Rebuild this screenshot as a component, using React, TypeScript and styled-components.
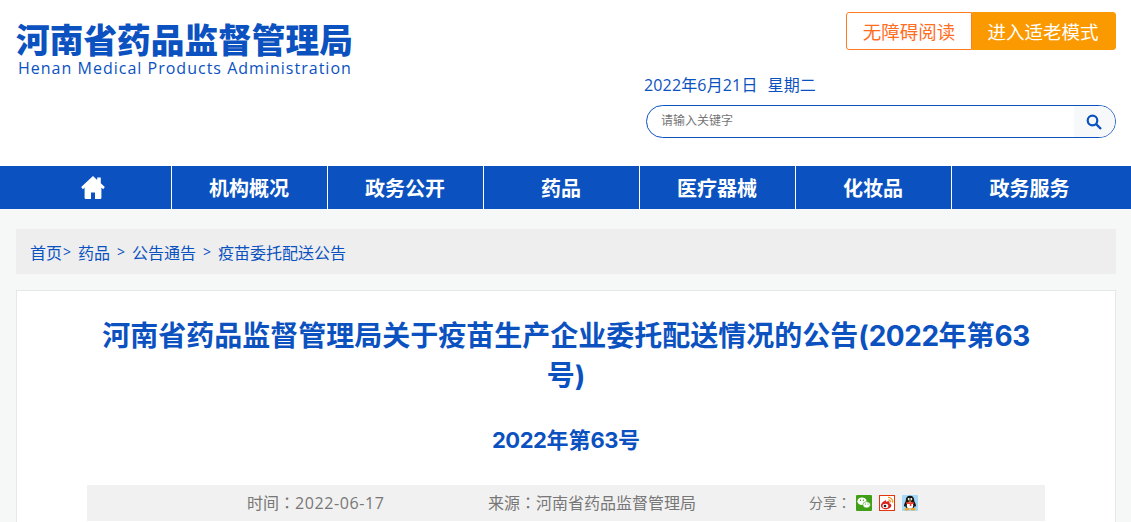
import React from 'react';
import styled, { createGlobalStyle } from 'styled-components';

const blue = '#0b52c0';

const GlobalStyle = createGlobalStyle`
  html, body {
    margin: 0;
    padding: 0;
    height: 522px;
    overflow: hidden;
    background: #f6f8f8;
    font-family: "Open Sans", "Noto Sans CJK SC", sans-serif;
  }
`;

const Header = styled.header`
  height: 166px;
  background: #fff;
  display: flex;
  justify-content: space-between;
  padding: 0 15px 0 16px;
  box-sizing: border-box;
`;

const Logo = styled.div`
  padding-top: 18px;
  color: ${blue};
`;

const LogoTitle = styled.div`
  font-family: "Noto Sans CJK SC", sans-serif;
  font-size: 33.7px;
  font-weight: 900;
  line-height: 42px;
  white-space: nowrap;
`;

const LogoSub = styled.div`
  font-family: "Open Sans", sans-serif;
  font-size: 16px;
  line-height: 17px;
  letter-spacing: 1.01px;
  margin-left: 2px;
  white-space: nowrap;
`;

const Tools = styled.div`
  width: 470px;
  display: flex;
  flex-direction: column;
`;

const ModeButtons = styled.div`
  display: flex;
  justify-content: flex-end;
  margin-top: 12px;
`;

const ModeButton = styled.div<{ $filled?: boolean }>`
  height: 38px;
  box-sizing: border-box;
  width: ${(p) => (p.$filled ? '144px' : '126px')};
  padding-right: ${(p) => (p.$filled ? '2px' : '0')};
  display: flex;
  align-items: center;
  justify-content: center;
  font-family: "Noto Sans CJK SC", sans-serif;
  font-size: 18.5px;
  color: ${(p) => (p.$filled ? '#fff' : '#ff6e1f')};
  background: ${(p) => (p.$filled ? '#fb9900' : '#fff')};
  border: 1px solid ${(p) => (p.$filled ? '#fb9900' : '#ff7d20')};
  border-radius: ${(p) => (p.$filled ? '0 3px 3px 0' : '3px 0 0 3px')};
`;

const DateLine = styled.div`
  display: flex;
  gap: 10px;
  margin-top: 24px;
  margin-left: -2px;
  font-size: 16px;
  line-height: 22px;
  letter-spacing: 0.15px;
  color: ${blue};
`;

const SearchBox = styled.div`
  display: flex;
  align-items: center;
  height: 33px;
  margin-top: 9px;
  box-sizing: border-box;
  border: 1px solid ${blue};
  border-radius: 17px;
  overflow: hidden;
  background: #fff;
`;

const SearchHint = styled.div`
  flex: 1;
  padding: 0 0 4px 14px;
  font-family: "Noto Sans CJK SC", sans-serif;
  font-size: 12px;
  color: #757575;
`;

const SearchButton = styled.div`
  width: 41px;
  height: 100%;
  padding-right: 2px;
  box-sizing: border-box;
  display: flex;
  align-items: center;
  justify-content: center;
  background: #f7f8f9;
`;

const Nav = styled.nav`
  height: 43px;
  background: ${blue};
  display: flex;
  padding-left: 16px;
`;

const NavItem = styled.div<{ $last?: boolean }>`
  width: 156px;
  box-sizing: border-box;
  padding-right: 1px;
  display: flex;
  align-items: center;
  justify-content: center;
  color: #fff;
  font-family: "Noto Sans CJK SC", sans-serif;
  font-size: 20px;
  font-weight: 700;
  border-right: ${(p) => (p.$last ? 'none' : '1px solid #fff')};
`;

const Main = styled.main`
  padding: 20px 15px 0 16px;
`;

const Breadcrumb = styled.div`
  height: 45px;
  background: #eee;
  display: flex;
  align-items: center;
  padding-left: 14px;
  font-family: "Noto Sans CJK SC", sans-serif;
  font-size: 16px;
  color: ${blue};
  white-space: pre;
`;

const Sep = styled.span<{ $tight?: boolean }>`
  font-family: "Open Sans", sans-serif;
  font-size: 14px;
  margin: ${(p) => (p.$tight ? '0 7px 0 1px' : '0 7px')};
`;

const Article = styled.article`
  margin-top: 16px;
  background: #fff;
  border: 1px solid #e6e8e8;
  border-bottom: none;
  height: 232px;
  padding: 0 70px;
  box-sizing: border-box;
`;

const Title = styled.h1`
  margin: 25px 0 0;
  color: ${blue};
  font-family: "Inter", "Noto Sans CJK SC", sans-serif;
  font-size: 28px;
  font-weight: 700;
  line-height: 40px;
  text-align: center;
`;

const SubTitle = styled.h2`
  margin: 29px 0 0;
  color: ${blue};
  font-family: "Inter", "Noto Sans CJK SC", sans-serif;
  font-size: 22px;
  font-weight: 700;
  line-height: 30px;
  text-align: center;
`;

const Digits = styled.span`
  letter-spacing: -0.5px;
`;

const Meta = styled.div`
  margin-top: 30px;
  height: 36px;
  background: #f1f1f1;
  display: flex;
  align-items: center;
  color: #777;
  font-size: 16px;
  white-space: nowrap;
`;

const MetaTime = styled.span`
  margin: 0 0 2px 160px;
  width: 241px;
`;

const MetaDate = styled.span`
  letter-spacing: 0.6px;
`;

const Colon = styled.span`
  font-family: "Noto Sans CJK TC", sans-serif;
`;

const MetaSource = styled.span`
  margin-bottom: 2px;
  width: 321px;
`;

const Share = styled.div`
  display: flex;
  align-items: center;
  font-size: 14px;
  gap: 5px;
`;

const ShareLabel = styled.span`
  margin-bottom: 2px;
`;

const ShareIcons = styled.div`
  display: flex;
  gap: 7px;
`;

const HomeIcon = () => (
  <svg width="24" height="23" viewBox="0 0 24 23" fill="#fff">
    <path d="M12 0L0.2 11 1.8 13.2 3.6 11.6V21.4c0 .9.6 1.6 1.5 1.6h4.9v-6.6h4v6.6h4.9c.9 0 1.5-.7 1.5-1.6V11.6l1.8 1.6L23.8 11 19.8 7.3V1.6h-3.6v2.4z" />
  </svg>
);

const SearchIcon = () => (
  <svg width="16" height="16" viewBox="0 0 16 16" fill="none">
    <circle cx="6.5" cy="6.5" r="4.8" stroke={blue} strokeWidth="2.2" />
    <path d="M10 10l5 5" stroke={blue} strokeWidth="2.4" />
  </svg>
);

const WechatIcon = () => (
  <svg width="16" height="16" viewBox="0 0 16 16">
    <rect width="16" height="16" rx="1" fill="#3f9f16" />
    <ellipse cx="6" cy="6.2" rx="4.6" ry="3.8" fill="#fff" />
    <ellipse cx="10.6" cy="9.8" rx="3.8" ry="3.1" fill="#fff" stroke="#3f9f16" strokeWidth="0.6" />
    <circle cx="4.5" cy="5.2" r="0.7" fill="#3f9f16" />
    <circle cx="7.4" cy="5.2" r="0.7" fill="#3f9f16" />
    <circle cx="9.4" cy="9" r="0.6" fill="#3f9f16" />
    <circle cx="12" cy="9" r="0.6" fill="#3f9f16" />
  </svg>
);

const WeiboIcon = () => (
  <svg width="16" height="16" viewBox="0 0 16 16">
    <rect x="0.5" y="0.5" width="15" height="15" fill="#fff" stroke="#e5340e" />
    <path d="M6.8 5.2c-2.4.8-5.2 3.4-4.8 6 .4 2.2 3 3.2 5.4 3 2.6-.2 5-1.8 5-3.6 0-1.2-1-1.8-2-2 .4-1 .2-2-.8-2.3-.9-.3-1.9.2-2.8.6.4-.8.6-1.9 0-1.7z" fill="#d8241f" />
    <ellipse cx="6.4" cy="10.9" rx="2.9" ry="2.2" fill="#fff" />
    <circle cx="6" cy="11" r="1.3" fill="#222" />
    <path d="M9 2.4a4.4 4.4 0 0 1 4.6 5.2M9.4 4.8a2.2 2.2 0 0 1 2 2.6" fill="none" stroke="#f5961d" strokeWidth="1.3" />
  </svg>
);

const QQIcon = () => (
  <svg width="16" height="16" viewBox="0 0 16 16">
    <rect width="16" height="16" rx="1" fill="#a5d9f8" />
    <path d="M8 0.8c-2.8 0-4.2 2-4.2 4.6 0 1-1.8 3.2-1.8 5.2 0 1 .6 1.2 1.2.6.6 1.4 2.2 2.8 4.8 2.8s4.2-1.4 4.8-2.8c.6.6 1.2.4 1.2-.6 0-2-1.8-4.2-1.8-5.2C12.2 2.8 10.8.8 8 .8z" fill="#161616" />
    <ellipse cx="8" cy="10.4" rx="3.2" ry="3.4" fill="#fff" />
    <circle cx="6.7" cy="3.9" r="1" fill="#fff" />
    <circle cx="9.3" cy="3.9" r="1" fill="#fff" />
    <path d="M5.8 5.6h4.4L8 7z" fill="#f5a61d" />
    <path d="M4 7.2h8v1.5l-2.6.3v2H7.8V9L4 8.7z" fill="#e8392b" />
    <ellipse cx="5" cy="14.3" rx="2.5" ry="1.2" fill="#f5a61d" />
    <ellipse cx="11" cy="14.3" rx="2.5" ry="1.2" fill="#f5a61d" />
  </svg>
);

const navItems = ['机构概况', '政务公开', '药品', '医疗器械', '化妆品', '政务服务'];

export default function App() {
  return (
    <>
      <GlobalStyle />
      <Header>
        <Logo>
          <LogoTitle>河南省药品监督管理局</LogoTitle>
          <LogoSub>Henan Medical Products Administration</LogoSub>
        </Logo>
        <Tools>
          <ModeButtons>
            <ModeButton>无障碍阅读</ModeButton>
            <ModeButton $filled>进入适老模式</ModeButton>
          </ModeButtons>
          <DateLine>
            <span>2022年6月21日</span>
            <span>星期二</span>
          </DateLine>
          <SearchBox>
            <SearchHint>请输入关键字</SearchHint>
            <SearchButton>
              <SearchIcon />
            </SearchButton>
          </SearchBox>
        </Tools>
      </Header>
      <Nav>
        <NavItem>
          <HomeIcon />
        </NavItem>
        {navItems.map((item, i) => (
          <NavItem key={item} $last={i === navItems.length - 1}>
            {item}
          </NavItem>
        ))}
      </Nav>
      <Main>
        <Breadcrumb>
          首页<Sep $tight>&gt;</Sep>药品<Sep>&gt;</Sep>公告通告<Sep>&gt;</Sep>疫苗委托配送公告
        </Breadcrumb>
        <Article>
          <Title>
            河南省药品监督管理局关于疫苗生产企业委托配送情况的公告(<Digits>2022</Digits>年第<Digits>63</Digits>号)
          </Title>
          <SubTitle>
            <Digits>2022</Digits>年第<Digits>63</Digits>号
          </SubTitle>
          <Meta>
            <MetaTime>
              时间<Colon>：</Colon>
              <MetaDate>2022-06-17</MetaDate>
            </MetaTime>
            <MetaSource>
              来源<Colon>：</Colon>河南省药品监督管理局
            </MetaSource>
            <Share>
              <ShareLabel>
                分享<Colon>：</Colon>
              </ShareLabel>
              <ShareIcons>
                <WechatIcon />
                <WeiboIcon />
                <QQIcon />
              </ShareIcons>
            </Share>
          </Meta>
        </Article>
      </Main>
    </>
  );
}
